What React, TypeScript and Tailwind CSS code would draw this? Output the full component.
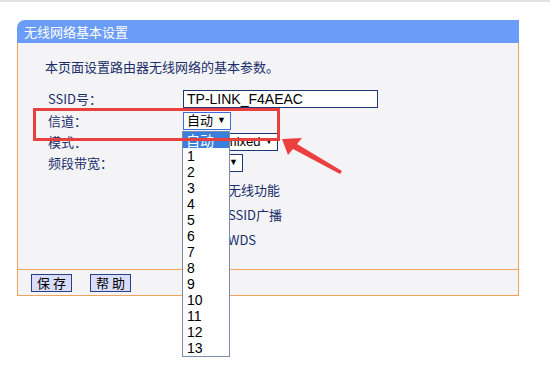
import React from "react"

const navy = "text-[#1b2d6b]"
const cjk = { fontFamily: '"Noto Sans CJK SC", "Noto Sans", sans-serif' }
const arial = { fontFamily: '"Liberation Sans", Arial, "Noto Sans CJK SC", sans-serif' }

const channels = ["1", "2", "3", "4", "5", "6", "7", "8", "9", "10", "11", "12", "13"]

function FakeSelect({ width, children, focused }: { width: number; children: React.ReactNode; focused?: boolean }) {
  return (
    <div
      className={`h-[18px] bg-white border flex items-center gap-[4px] pl-[3px] pr-[4px] text-[13px] text-black leading-none ${
        focused ? "border-[#3a6fd8]" : "border-[#1f357a]"
      }`}
      style={{ width, ...arial }}
    >
      <span className="whitespace-nowrap">{children}</span>
      <span className="text-[9px] ml-auto">▼</span>
    </div>
  )
}

function Row({ label, children }: { label: string; children: React.ReactNode }) {
  return (
    <div className="flex items-center h-[21px]">
      <div className={`w-[135px] text-[13px] ${navy}`} style={cjk}>{label}</div>
      {children}
    </div>
  )
}

function CheckRow({ text }: { text: string }) {
  return (
    <div className="flex items-center h-[25px] pl-[135px]">
      <div className="w-[13px] h-[13px] border border-[#555] bg-white ml-[2px] mr-[4px]" />
      <span className={`text-[13px] ${navy}`} style={cjk}>{text}</span>
    </div>
  )
}

export default function App() {
  return (
    <div className="relative w-[550px] h-[368px] bg-white overflow-hidden">
      <div className="h-[2px] bg-[#e2e2e2]" />

      <div className="ml-[17px] mt-[18px] w-[502px]">
        {/* Header */}
        <div className="h-[23px] bg-[#6b9cf7] rounded-tl-[8px] flex items-center px-[7px] text-white text-[13px]" style={cjk}>
          无线网络基本设置
        </div>

        {/* Body */}
        <div className="h-[226px] bg-[#f4f4f6] border-x border-[#eea35c] pl-[30px] pt-[14px]">
          <div className={`h-[18px] text-[13px] ${navy} -ml-[3px]`} style={cjk}>本页面设置路由器无线网络的基本参数。</div>
          <div className="mt-[13px]">
            <Row label="SSID号：">
              <div className="w-[195px] h-[18px] bg-white border border-[#1f357a] pl-[3px] text-[14px] text-black leading-[16px] overflow-hidden" style={arial}>
                TP-LINK_F4AEAC
              </div>
            </Row>
            <div className="h-[1px]" />
            <Row label="信道：">
              <FakeSelect width={48} focused>自动</FakeSelect>
            </Row>
            <Row label="模式：">
              <FakeSelect width={95}>11bgn mixed</FakeSelect>
            </Row>
            <Row label="频段带宽：">
              <FakeSelect width={60}>自动</FakeSelect>
            </Row>
            <div className="h-[4px]" />
            <CheckRow text="开启无线功能" />
            <CheckRow text="开启SSID广播" />
            <CheckRow text="开启WDS" />
          </div>
        </div>

        {/* Footer */}
        <div className="h-[27px] bg-[#f4f4f6] border border-[#eea35c] flex items-center gap-[18px] pl-[13px]">
          <button className="w-[41px] h-[18px] bg-[#d9dcfb] border border-[#2a3f8a] text-[13px] text-black tracking-[3px] leading-none pl-[3px]" style={cjk}>
            保存
          </button>
          <button className="w-[41px] h-[18px] bg-[#d9dcfb] border border-[#2a3f8a] text-[13px] text-black tracking-[3px] leading-none pl-[3px]" style={cjk}>
            帮助
          </button>
        </div>
      </div>

      {/* Open channel dropdown */}
      <div className="absolute left-[182px] top-[131px] w-[48px] bg-white border border-[#7d8cab]" style={arial}>
        <div className="h-[16px] bg-[#3b7fdc] text-white text-[14px] leading-[16px] pl-[3px]" style={cjk}>自动</div>
        {channels.map((c) => (
          <div key={c} className="h-[16px] text-[14px] leading-[16px] text-black pl-[4px]">{c}</div>
        ))}
      </div>

      {/* Annotation */}
      <svg className="absolute left-0 top-0 pointer-events-none" width="550" height="368" viewBox="0 0 550 368">
        <rect x="34.5" y="109.5" width="244" height="30" fill="none" stroke="#e8403f" strokeWidth="3" />
        <polygon points="282,139 302,138 297,144 342,171 340,174 293,149 288,155" fill="#ec4040" />
      </svg>
    </div>
  )
}
